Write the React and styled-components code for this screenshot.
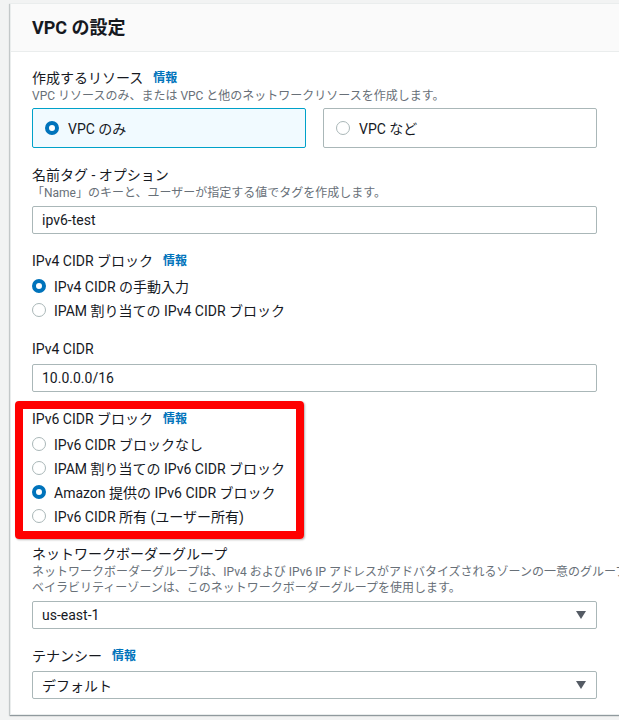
import styled, { createGlobalStyle } from "styled-components";

const GlobalStyle = createGlobalStyle`
  html, body {
    margin: 0;
    padding: 0;
    background: #f2f3f3;
    overflow: hidden;
  }
  body {
    font-family: Roboto, "Noto Sans CJK JP", sans-serif;
    color: #16191f;
  }
`;

const Page = styled.div`
  padding: 3px 0 0 10px;
  height: 720px;
  box-sizing: border-box;
`;

const Card = styled.section`
  width: 720px;
  background: #ffffff;
  border: 1px solid #eaeded;
  border-right: none;
  box-shadow: 0 1px 1px 0 rgba(0, 28, 36, 0.3),
    -1px 1px 1px 0 rgba(0, 28, 36, 0.15);
`;

const Header = styled.header`
  height: 48px;
  box-sizing: border-box;
  padding: 0 21px;
  display: flex;
  align-items: center;
  background: #fafafa;
  border-bottom: 1px solid #eaeded;
`;

const Title = styled.h2`
  margin: 0;
  font-size: 18px;
  font-weight: 700;
  line-height: 22px;
`;

const Body = styled.div`
  width: 565px;
  padding: 16px 0 15px 21px;
  display: flex;
  flex-direction: column;
  gap: 17px;
`;

const Field = styled.div`
  display: flex;
  flex-direction: column;
`;

const Label = styled.div`
  font-size: 14px;
  line-height: 20px;
  display: flex;
  align-items: center;
  gap: 10px;
  white-space: nowrap;
`;

const Info = styled.span`
  color: #0073bb;
  font-size: 12px;
  font-weight: 700;
`;

const Desc = styled.div`
  font-size: 12px;
  line-height: 16px;
  color: #687078;
  white-space: nowrap;
`;

const Tiles = styled.div`
  margin-top: 4px;
  display: grid;
  grid-template-columns: 1fr 1fr;
  gap: 17px;
`;

const Tile = styled.div`
  height: 40px;
  box-sizing: border-box;
  display: flex;
  align-items: center;
  gap: 9px;
  padding: 0 12px;
  border: 1px solid ${(p) => (p.$on ? "#00a1c9" : "#aab7b8")};
  border-radius: 2px;
  background: ${(p) => (p.$on ? "#f1faff" : "#ffffff")};
  font-size: 14px;
`;

const Dot = styled.span`
  width: 14px;
  height: 14px;
  box-sizing: border-box;
  border-radius: 50%;
  flex: none;
  border: ${(p) => (p.$on ? "4px solid #0073bb" : "1.5px solid #aab7b8")};
  background: #ffffff;
`;

const Radios = styled.div`
  margin-top: 3px;
  display: flex;
  flex-direction: column;
`;

const Radio = styled.div`
  height: 24px;
  display: flex;
  align-items: center;
  gap: 8px;
  font-size: 14px;
  white-space: nowrap;
`;

const Input = styled.div`
  margin-top: 5px;
  height: 28px;
  box-sizing: border-box;
  border: 1px solid #aab7b8;
  border-radius: 2px;
  padding: 0 9px;
  display: flex;
  align-items: center;
  justify-content: space-between;
  font-size: 14px;
`;

const Caret = styled.span`
  width: 0;
  height: 0;
  margin-right: 1px;
  border-left: 5px solid transparent;
  border-right: 5px solid transparent;
  border-top: 8px solid #545b64;
`;

const Highlight = styled.div`
  width: 264px;
  margin: -8px 0 -12px -17px;
  padding: 0 0 3px 9px;
  border: 8px solid #ff0000;
  border-radius: 4px;
  box-shadow: 1px 1px 2px rgba(0, 0, 0, 0.3);
`;

const RadioList = ({ items, selected }) => (
  <Radios>
    {items.map((t, i) => (
      <Radio key={t}>
        <Dot $on={i === selected} />
        {t}
      </Radio>
    ))}
  </Radios>
);

export default function App() {
  return (
    <Page>
      <GlobalStyle />
      <Card>
        <Header>
          <Title>VPC の設定</Title>
        </Header>
        <Body>
          <Field>
            <Label>
              作成するリソース <Info>情報</Info>
            </Label>
            <Desc>VPC リソースのみ、または VPC と他のネットワークリソースを作成します。</Desc>
            <Tiles>
              <Tile $on>
                <Dot $on />
                VPC のみ
              </Tile>
              <Tile>
                <Dot />
                VPC など
              </Tile>
            </Tiles>
          </Field>

          <Field>
            <Label>名前タグ - オプション</Label>
            <Desc>「Name」のキーと、ユーザーが指定する値でタグを作成します。</Desc>
            <Input>ipv6-test</Input>
          </Field>

          <Field>
            <Label>
              IPv4 CIDR ブロック <Info>情報</Info>
            </Label>
            <RadioList
              selected={0}
              items={["IPv4 CIDR の手動入力", "IPAM 割り当ての IPv4 CIDR ブロック"]}
            />
          </Field>

          <Field>
            <Label>IPv4 CIDR</Label>
            <Input>10.0.0.0/16</Input>
          </Field>

          <Highlight>
            <Field>
              <Label>
                IPv6 CIDR ブロック <Info>情報</Info>
              </Label>
              <RadioList
                selected={2}
                items={[
                  "IPv6 CIDR ブロックなし",
                  "IPAM 割り当ての IPv6 CIDR ブロック",
                  "Amazon 提供の IPv6 CIDR ブロック",
                  "IPv6 CIDR 所有 (ユーザー所有)",
                ]}
              />
            </Field>
          </Highlight>

          <Field>
            <Label>ネットワークボーダーグループ</Label>
            <Desc>
              ネットワークボーダーグループは、IPv4 および IPv6 IP アドレスがアドバタイズされるゾーンの一意のグループです。ア
            </Desc>
            <Desc>ベイラビリティーゾーンは、このネットワークボーダーグループを使用します。</Desc>
            <Input>
              us-east-1
              <Caret />
            </Input>
          </Field>

          <Field>
            <Label>
              テナンシー <Info>情報</Info>
            </Label>
            <Input>
              デフォルト
              <Caret />
            </Input>
          </Field>
        </Body>
      </Card>
    </Page>
  );
}
